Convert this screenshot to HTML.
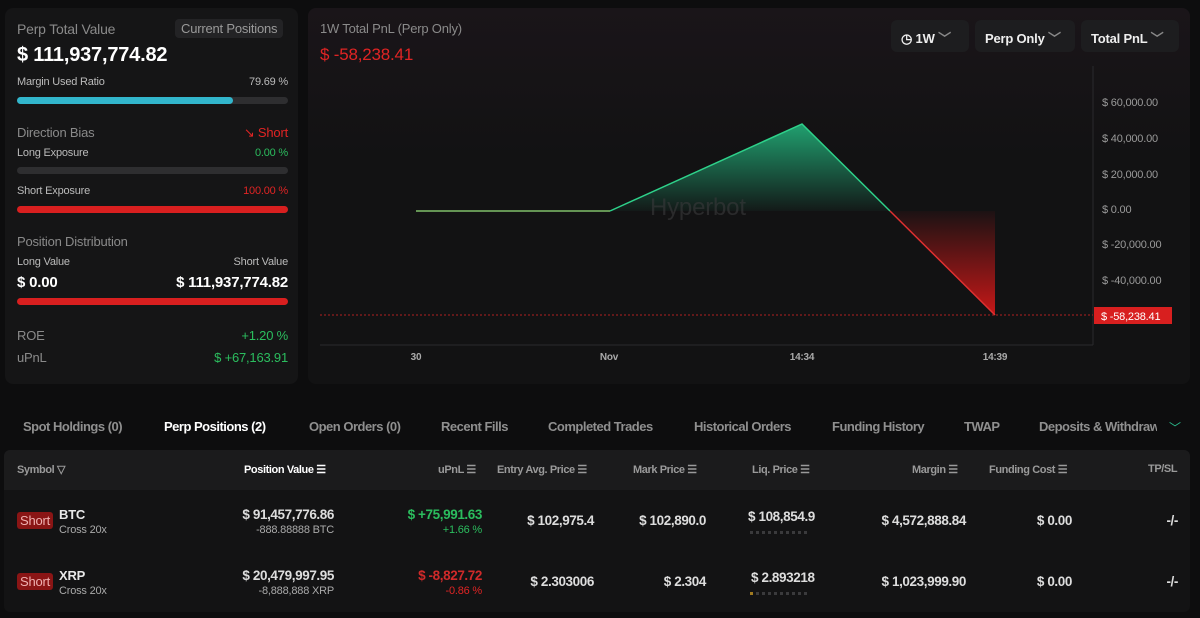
<!DOCTYPE html><html><head><style>
*{box-sizing:border-box;margin:0;padding:0}
body{width:1200px;height:618px;background:#0d0d0e;font-family:"Liberation Sans",sans-serif;color:#e8e8e8;position:relative;overflow:hidden;font-size:12px;letter-spacing:-0.2px}
.a{position:absolute}
.p{background:#151516;border-radius:8px}
.g{color:#8a8a8a}.gr{color:#2bbd5e}.rd{color:#e02424}
.bar{position:absolute;height:7px;border-radius:4px;background:#2e2e30}
.r{text-align:right}
.th{position:absolute;top:463px;font-size:11px;color:#9a9a9a;font-weight:bold;letter-spacing:-0.4px}
.td{position:absolute;font-size:13.5px;color:#ddd;font-weight:bold;letter-spacing:-0.4px}
.tab{position:absolute;top:419px;font-size:13px;color:#8f8f8f;font-weight:bold;letter-spacing:-0.5px;white-space:nowrap}
.sh{position:absolute;background:#8a1515;color:#f0b0b0;font-size:13px;padding:1px 3px;border-radius:3px}
.dd{position:absolute;top:20px;height:32px;background:#1d1d1f;border-radius:6px;font-weight:bold;font-size:13px;color:#eee;padding:8px 10px}
.yl{position:absolute;left:1102px;font-size:11px;color:#9a9a9a}
.dots{position:absolute;height:3px;background:repeating-linear-gradient(90deg,#3a3a3c 0 3px,transparent 3px 6px)}
</style></head><body>
<div class="a p" style="left:5px;top:8px;width:293px;height:376px"></div>
<div class="a g" style="left:17px;top:21px;font-size:14px">Perp Total Value</div>
<div class="a" style="left:175px;top:19px;background:#232325;border-radius:4px;padding:2px 6px;font-size:13px;color:#999">Current Positions</div>
<div class="a" style="left:17px;top:44px;font-size:20px;font-weight:bold;color:#fff">$ 111,937,774.82</div>
<div class="a" style="left:17px;top:76px;font-size:11px;color:#bbb">Margin Used Ratio</div>
<div class="a r" style="right:912px;top:76px;font-size:11px;color:#bbb">79.69 %</div>
<div class="bar" style="left:17px;top:97px;width:271px"></div>
<div class="bar" style="left:17px;top:97px;width:216px;background:#32b6cc"></div>
<div class="a g" style="left:17px;top:125px;font-size:13px">Direction Bias</div>
<div class="a rd" style="right:912px;top:125px;font-size:13px">↘ Short</div>
<div class="a" style="left:17px;top:147px;font-size:11px;color:#bbb">Long Exposure</div>
<div class="a gr" style="right:912px;top:147px;font-size:11px">0.00 %</div>
<div class="bar" style="left:17px;top:167px;width:271px"></div>
<div class="a" style="left:17px;top:185px;font-size:11px;color:#bbb">Short Exposure</div>
<div class="a rd" style="right:912px;top:185px;font-size:11px">100.00 %</div>
<div class="bar" style="left:17px;top:206px;width:271px;background:#d81f1f"></div>
<div class="a g" style="left:17px;top:234px;font-size:13px">Position Distribution</div>
<div class="a" style="left:17px;top:256px;font-size:11px;color:#bbb">Long Value</div>
<div class="a" style="right:912px;top:256px;font-size:11px;color:#bbb">Short Value</div>
<div class="a" style="left:17px;top:274px;font-size:15px;font-weight:bold;color:#fff">$ 0.00</div>
<div class="a" style="right:912px;top:274px;font-size:15px;font-weight:bold;color:#fff">$ 111,937,774.82</div>
<div class="bar" style="left:17px;top:298px;width:271px;background:#d81f1f"></div>
<div class="a g" style="left:17px;top:328px;font-size:13px">ROE</div>
<div class="a gr" style="right:912px;top:328px;font-size:13px">+1.20 %</div>
<div class="a g" style="left:17px;top:350px;font-size:13px">uPnL</div>
<div class="a gr" style="right:912px;top:350px;font-size:13px">$ +67,163.91</div>

<div class="a p" style="left:308px;top:8px;width:882px;height:376px;background:linear-gradient(180deg,#1a1519,#121213 40%)"></div>
<div class="a g" style="left:320px;top:21px;font-size:13px">1W Total PnL (Perp Only)</div>
<div class="a rd" style="left:320px;top:45px;font-size:17px">$ -58,238.41</div>
<div class="dd" style="left:891px;width:78px">◷ 1W <span style="color:#888">﹀</span></div>
<div class="dd" style="left:975px;width:100px">Perp Only <span style="color:#888">﹀</span></div>
<div class="dd" style="left:1081px;width:98px">Total PnL <span style="color:#888">﹀</span></div>
<svg class="a" style="left:0;top:0" width="1200" height="400">
<defs><linearGradient id="gg" x1="0" y1="124" x2="0" y2="211" gradientUnits="userSpaceOnUse"><stop offset="0" stop-color="#22b07a" stop-opacity=".9"/><stop offset="1" stop-color="#22b07a" stop-opacity=".05"/></linearGradient>
<linearGradient id="rg" x1="0" y1="211" x2="0" y2="315" gradientUnits="userSpaceOnUse"><stop offset="0" stop-color="#d01818" stop-opacity=".05"/><stop offset="1" stop-color="#d01818" stop-opacity=".95"/></linearGradient></defs>
<line x1="1093" y1="66" x2="1093" y2="345" stroke="#2a2a2d"/>
<line x1="320" y1="345" x2="1093" y2="345" stroke="#2a2a2d"/>
<polygon points="610,211 802,124 890,211" fill="url(#gg)"/>
<polygon points="890,211 995,315 995,211" fill="url(#rg)"/>
<polyline points="416,211 610,211" fill="none" stroke="#7fc06a" stroke-width="1.5"/>
<polyline points="610,211 802,124 890,211" fill="none" stroke="#2ed18a" stroke-width="1.5"/>
<line x1="890" y1="211" x2="995" y2="315" stroke="#e03030" stroke-width="1.5"/>
<line x1="320" y1="315" x2="1093" y2="315" stroke="#b02020" stroke-dasharray="2 2"/>
<rect x="1094" y="307" width="78" height="17" fill="#d81f1f"/>
<text x="1101" y="320" font-size="11" fill="#fff" font-family="Liberation Sans">$ -58,238.41</text>
<text x="650" y="215" font-size="24" fill="#3a3a3c" opacity=".6" font-family="Liberation Sans">Hyperbot</text>
<g font-size="10" fill="#aaa" font-family="Liberation Sans" font-weight="bold" text-anchor="middle">
<text x="416" y="360">30</text><text x="609" y="360">Nov</text><text x="802" y="360">14:34</text><text x="995" y="360">14:39</text></g>
</svg>
<div class="yl" style="top:97px">$ 60,000.00</div>
<div class="yl" style="top:133px">$ 40,000.00</div>
<div class="yl" style="top:169px">$ 20,000.00</div>
<div class="yl" style="top:204px">$ 0.00</div>
<div class="yl" style="top:239px">$ -20,000.00</div>
<div class="yl" style="top:275px">$ -40,000.00</div>

<div class="tab" style="left:23px">Spot Holdings (0)</div>
<div class="tab" style="left:164px;color:#fff">Perp Positions (2)</div>
<div class="tab" style="left:309px">Open Orders (0)</div>
<div class="tab" style="left:441px">Recent Fills</div>
<div class="tab" style="left:548px">Completed Trades</div>
<div class="tab" style="left:694px">Historical Orders</div>
<div class="tab" style="left:832px">Funding History</div>
<div class="tab" style="left:964px">TWAP</div>
<div class="tab" style="left:1039px;width:118px;overflow:hidden">Deposits &amp; Withdraw</div>
<div class="a" style="left:1169px;top:419px;color:#2bbd8e;font-size:12px">﹀</div>

<div class="a" style="left:4px;top:450px;width:1186px;height:162px;background:#131314;border-radius:6px"></div>
<div class="a" style="left:4px;top:450px;width:1186px;height:40px;background:#1b1b1c;border-radius:6px 6px 0 0"></div>
<div class="th" style="left:17px">Symbol ▽</div>
<div class="th" style="left:244px;color:#fff">Position Value ☰</div>
<div class="th" style="left:438px">uPnL ☰</div>
<div class="th" style="left:497px">Entry Avg. Price ☰</div>
<div class="th" style="left:633px">Mark Price ☰</div>
<div class="th" style="left:752px">Liq. Price ☰</div>
<div class="th" style="left:912px">Margin ☰</div>
<div class="th" style="left:989px">Funding Cost ☰</div>
<div class="th" style="left:1148px">TP/SL</div>

<div class="sh" style="left:17px;top:512px">Short</div>
<div class="a" style="left:59px;top:507px;font-size:13px;font-weight:bold">BTC</div>
<div class="a" style="left:59px;top:524px;font-size:11px;color:#aaa">Cross 20x</div>
<div class="td" style="right:866px;top:507px">$ 91,457,776.86</div>
<div class="a" style="right:866px;top:524px;font-size:11px;color:#aaa">-888.88888 BTC</div>
<div class="td gr" style="right:718px;top:507px;color:#2bbd5e">$ +75,991.63</div>
<div class="a gr" style="right:718px;top:524px;font-size:11px">+1.66 %</div>
<div class="td" style="right:606px;top:513px">$ 102,975.4</div>
<div class="td" style="right:494px;top:513px">$ 102,890.0</div>
<div class="td" style="left:748px;top:509px">$ 108,854.9</div>
<div class="dots" style="left:750px;top:531px;width:60px"></div>
<div class="td" style="right:234px;top:513px">$ 4,572,888.84</div>
<div class="td" style="right:128px;top:513px">$ 0.00</div>
<div class="td" style="right:22px;top:513px">-/-</div>

<div class="sh" style="left:17px;top:573px">Short</div>
<div class="a" style="left:59px;top:568px;font-size:13px;font-weight:bold">XRP</div>
<div class="a" style="left:59px;top:585px;font-size:11px;color:#aaa">Cross 20x</div>
<div class="td" style="right:866px;top:568px">$ 20,479,997.95</div>
<div class="a" style="right:866px;top:585px;font-size:11px;color:#aaa">-8,888,888 XRP</div>
<div class="td rd" style="right:718px;top:568px;color:#d02a2a">$ -8,827.72</div>
<div class="a rd" style="right:718px;top:585px;font-size:11px">-0.86 %</div>
<div class="td" style="right:606px;top:574px">$ 2.303006</div>
<div class="td" style="right:494px;top:574px">$ 2.304</div>
<div class="td" style="left:751px;top:570px">$ 2.893218</div>
<div class="dots" style="left:750px;top:592px;width:60px"></div>
<div class="a" style="left:750px;top:592px;width:3px;height:3px;background:#a07a20"></div>
<div class="td" style="right:234px;top:574px">$ 1,023,999.90</div>
<div class="td" style="right:128px;top:574px">$ 0.00</div>
<div class="td" style="right:22px;top:574px">-/-</div>
</body></html>
